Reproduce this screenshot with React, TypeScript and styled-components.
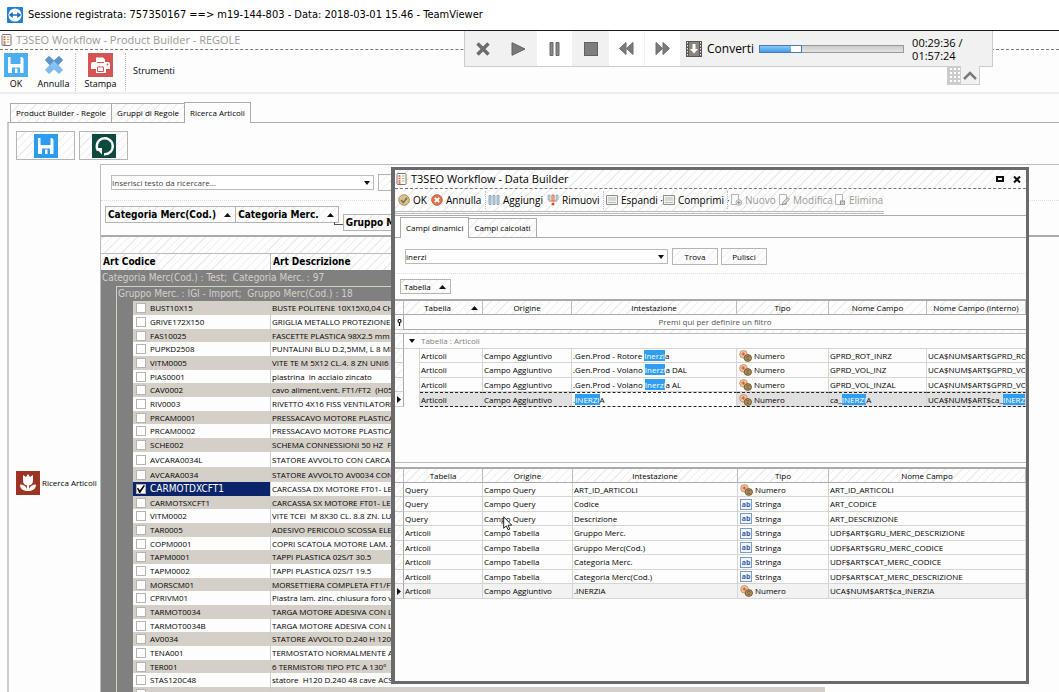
import React from 'react';
import styled, { createGlobalStyle, css } from 'styled-components';

const ui = `"Open Sans", "Noto Sans", sans-serif`;
const wide = `"DejaVu Sans Condensed", "DejaVu Sans", sans-serif`;

const hatch = css`
  background-image: repeating-linear-gradient(-45deg, transparent 0 5px, #ececec 5px 6px);
`;

const Global = createGlobalStyle`
  * { box-sizing: border-box; }
  body { margin: 0; background: #fdfdfd; font-family: ${ui}; font-size: 8px; line-height: 12px; color: #000; }
  button, input { font: inherit; color: inherit; margin: 0; padding: 0; border: 0; background: none; border-radius: 0; }
  table { border-collapse: separate; border-spacing: 0; table-layout: fixed; }
  td, th { padding: 0; font-weight: normal; text-align: left; white-space: pre; overflow: hidden; }
  svg { flex: none; }
`;

const Desktop = styled.div`
  position: relative;
  height: 100vh;
  overflow: hidden;
  display: flex;
  flex-direction: column;
`;

const SessionBar = styled.header`
  flex: none;
  height: 31px;
  display: flex;
  align-items: center;
  gap: 5px;
  padding-left: 7px;
  background: #fff;
  border-bottom: 1px solid #1c1c1c;
  font: 11px/16px ${wide};
`;

const AppTitle = styled.div`
  flex: none;
  height: 19px;
  display: flex;
  align-items: center;
  gap: 4px;
  padding-left: 1px;
  border-bottom: 1px dashed #777;
  font-size: 11px;
  line-height: 14px;
  color: #999c94;
`;

const MainToolbar = styled.div`
  flex: none;
  height: 44px;
  display: flex;
  padding-top: 3px;
  border-bottom: 2px solid #eee;
`;

const BigTool = styled.button<{ $w: number }>`
  width: ${p => p.$w}px;
  display: flex;
  flex-direction: column;
  align-items: center;
  gap: 1px;
  font-size: 9px;
`;

const ToolSeparator = styled.span<{ $small?: boolean }>`
  border-left: 1px dotted #bbb;
  margin: 0 0 1px;
  ${p => p.$small && 'height: 18px; margin: 0 2px 0 1px;'}
`;

const MenuTool = styled.button`
  align-self: center;
  padding: 0 7px 4px;
  font-size: 9px;
`;

const Tabs = styled.div<{ $left: number; $top: number }>`
  flex: none;
  display: flex;
  align-items: flex-end;
  padding: ${p => p.$top}px 0 0 ${p => p.$left}px;
`;

const Tab = styled.button<{ $active?: boolean }>`
  height: ${p => (p.$active ? 21 : 19)}px;
  padding: 0 5px;
  border: 1px solid #aaa;
  border-bottom: 0;
  margin-right: -1px;
  white-space: nowrap;
  ${p => (p.$active ? 'background: #fdfdfd; position: relative; margin-bottom: -1px;' : hatch)}
`;

const Page = styled.main`
  flex: 1;
  min-height: 0;
  display: flex;
  flex-direction: column;
  margin-left: 7px;
  border-left: 2px solid #ccc;
  border-top: 1px solid #aaa;
`;

const ActionRow = styled.div`
  flex: none;
  display: flex;
  gap: 4px;
  padding: 8px 0 4px 7px;
`;

const ActionButton = styled.button<{ $w: number }>`
  width: ${p => p.$w}px;
  height: 29px;
  display: flex;
  align-items: center;
  justify-content: center;
  border: 1px solid #b5b5b5;
  ${hatch}
`;

const Body = styled.div`
  flex: 1;
  min-height: 0;
  display: flex;
`;

const Side = styled.nav`
  flex: none;
  width: 91px;
  padding: 307px 0 0 7px;
`;

const SideLink = styled.a`
  display: flex;
  align-items: center;
  gap: 2px;
  color: inherit;
  text-decoration: none;
  white-space: nowrap;
`;

const GridPanel = styled.section`
  flex: 1;
  min-width: 0;
  border-left: 1px solid #bbb;
  border-top: 1px solid #bbb;
`;

const SearchRow = styled.div<{ $main?: boolean }>`
  display: flex;
  align-items: center;
  gap: 3px;
  padding: ${p => (p.$main ? '9px 0 9px 10px' : '10px 0 8px 10px')};
  border-bottom: 1px dotted #ddd;
`;

const Combo = styled.div<{ $w: number }>`
  flex: none;
  width: ${p => p.$w}px;
  height: 15px;
  display: flex;
  align-items: center;
  margin-right: 1px;
  border: 1px solid #bbb;
  background: #fff;
  input { flex: 1; min-width: 0; height: 13px; outline: 0; }
  input::placeholder { color: #444; opacity: 1; }
  button { width: 12px; height: 13px; display: flex; align-items: center; justify-content: center; }
`;

const PushButton = styled.button`
  flex: none;
  width: 46px;
  height: 17px;
  border: 1px solid #b5b5b5;
  ${hatch}
`;

const Chips = styled.div<{ $main?: boolean }>`
  display: flex;
  align-items: flex-start;
  padding: ${p => (p.$main ? '5px 0 0 4px' : '5px 0 5px 5px')};
  ${p => p.$main && 'height: 36px; border-bottom: 2px solid #aaa;'}
`;

const Chip = styled.button<{ $bold?: boolean; $low?: boolean }>`
  height: ${p => (p.$bold ? 17 : 15)}px;
  display: flex;
  align-items: center;
  gap: 8px;
  padding: 0 4px 0 ${p => (p.$bold ? 2 : 3)}px;
  margin: ${p => (p.$low ? '8px 0 0' : '0 -1px 0 0')};
  border: 1px solid #b5b5b5;
  white-space: nowrap;
  ${p => p.$bold && `font-family: ${wide}; font-weight: bold; font-size: 10px;`}
  ${hatch}
`;

const Elbow = styled.span`
  width: 9px;
  height: 3px;
  margin: 16px 0 0 -4px;
  border-left: 1px solid #555;
  border-bottom: 1px solid #555;
`;

const ArticleTable = styled.table`
  width: 724px;
`;

const BandCell = styled.td`
  height: 17px;
  border-bottom: 1px solid #bbb;
  ${hatch}
`;

const ArticleHead = styled.th`
  height: 16px;
  padding-left: 2px;
  border-right: 1px solid #bbb;
  font-family: ${wide};
  font-weight: bold;
  font-size: 10px;
  ${hatch}
`;

const GroupCell = styled.td<{ $nested?: boolean }>`
  height: ${p => (p.$nested ? 15 : 16)}px;
  padding-left: 1px;
  background: #808080;
  color: #d4d0c8;
  font-family: ${wide};
  font-size: 10px;
  ${p => p.$nested && 'border-left: 1px solid #d4d0c8; border-top: 1px solid #d4d0c8;'}
`;

const Indent = styled.td<{ $line?: boolean }>`
  background: #808080;
  ${p => p.$line && 'border-left: 1px solid #d4d0c8;'}
`;

const ArticleRow = styled.tr<{ $tall?: boolean; $selected?: boolean }>`
  height: 14px;
  &:nth-child(3n) { height: 13px; }
  ${p => p.$tall && '&&& { height: 15px; }'}
  &:nth-child(odd) { background: #d4d0c8; }
  td:nth-child(3) {
    border-right: 1px solid #ccc;
    ${p => p.$selected && `background: #0a246a; color: #fff; font-family: ${wide}; font-size: 10px;`}
  }
  td:nth-child(4) { padding-left: 1px; }
`;

const CheckLabel = styled.label`
  display: flex;
  align-items: center;
  gap: 4px;
  height: 12px;
  padding-left: 3px;
`;

const Check = styled.input`
  appearance: none;
  flex: none;
  width: 10px;
  height: 10px;
  border: 1px solid #b4b4b4;
  background: #fff;
  &:checked::after {
    content: '';
    display: block;
    width: 8px;
    height: 8px;
    background: #000;
    clip-path: polygon(0 45%, 15% 35%, 35% 65%, 85% 0, 100% 8%, 40% 100%, 28% 100%);
  }
`;

/* ---- playback overlay ---- */

const Player = styled.div`
  position: absolute;
  z-index: 2;
  top: 31px;
  left: 464px;
  width: 529px;
  height: 36px;
  display: flex;
  background: #f1f1f1;
  border: 1px solid #ccc;
  border-top: 0;
`;

const PlayerButton = styled.button<{ $lit?: boolean }>`
  width: 36px;
  display: flex;
  align-items: center;
  justify-content: center;
  border-right: 1px solid #f1f1f1;
  background: ${p => (p.$lit ? '#fff' : '#f1f1f1')};
`;

const ConvertButton = styled.button`
  display: flex;
  align-items: center;
  gap: 5px;
  padding: 0 5px;
  font-size: 12px;
  line-height: 16px;
`;

const Track = styled.div`
  align-self: center;
  width: 145px;
  height: 8px;
  border: 1px solid #999;
  background: linear-gradient(#ccc, #e2e2e2);
`;

const Played = styled.div`
  height: 8px;
  margin: -1px;
  border: 1px solid #4a78b8;
  border-right: 11px solid #fff;
  outline: 1px solid #4a78b8;
  outline-offset: -1px;
  background: linear-gradient(#8cc8f4, #3f9fe8);
`;

const Clock = styled.div`
  padding: 5px 0 0 8px;
  font-size: 11px;
  line-height: 13px;
`;

const PlayerHandle = styled.div`
  position: absolute;
  top: 35px;
  right: 12px;
  display: flex;
  width: 33px;
  height: 19px;
  border: 1px solid #ccc;
  border-top: 0;
  background: #f1f1f1;
`;

const Grip = styled.span`
  width: 13px;
  background: repeating-linear-gradient(90deg, #ccc 0 2px, transparent 2px 4px), repeating-linear-gradient(#ccc 0 2px, #fff 2px 4px);
`;

const FoldButton = styled.button`
  flex: 1;
  display: flex;
  align-items: center;
  justify-content: center;
`;

/* ---- data builder window ---- */

const Dialog = styled.section`
  position: absolute;
  z-index: 1;
  top: 167px;
  left: 391px;
  right: 30px;
  bottom: 8px;
  display: flex;
  flex-direction: column;
  border: 3px solid #6a6a6c;
  border-left-width: 4px;
  background: #fdfdfd;
`;

const DialogTitle = styled.div`
  flex: none;
  height: 19px;
  display: flex;
  align-items: center;
  gap: 4px;
  padding: 0 3px 0 1px;
  border-bottom: 1px dashed #777;
  font-size: 11px;
  line-height: 14px;
  ${hatch}
  h2 { flex: 1; margin: 0; font: inherit; }
  button { width: 13px; height: 12px; display: flex; align-items: center; justify-content: center; }
`;

const DialogTools = styled.div`
  flex: none;
  align-self: flex-start;
  width: 489px;
  height: 25px;
  display: flex;
  align-items: center;
  padding-left: 3px;
  border-bottom: 3px double #bbb;
  ${hatch}
`;

const SmallTool = styled.button<{ $w: number }>`
  flex: none;
  width: ${p => p.$w}px;
  display: flex;
  align-items: center;
  gap: 3px;
  font-size: 10px;
  line-height: 14px;
  white-space: nowrap;
  &:disabled { color: #999c94; }
`;

const DialogBody = styled.div`
  flex: 1;
  min-height: 0;
  display: flex;
  flex-direction: column;
  margin-top: 1px;
  border-top: 1px solid #aaa;
`;

const TabPage = styled.div`
  flex: 1;
  min-height: 0;
  border-top: 1px solid #aaa;
  display: flex;
  flex-direction: column;
`;

const FieldPane = styled.div<{ $h?: number }>`
  ${p => (p.$h ? `flex: none; height: ${p.$h}px; border-bottom: 1px solid #bbb; margin-bottom: 4px;` : 'flex: 1; min-height: 0;')}
  border-top: 2px solid #aaa;
  overflow: hidden;
`;

const FieldTable = styled.table`
  width: 100%;
`;

const HeadCell = styled.th`
  height: 14px;
  text-align: center;
  border-right: 1px solid #bbb;
  border-bottom: 1px solid #aaa;
  ${hatch}
`;

const HeadSort = styled.span`
  display: flex;
  align-items: center;
  padding-right: 4px;
  b { flex: 1; font-weight: normal; }
`;

const Gutter = styled.td`
  border-right: 1px solid #aaa;
  border-bottom: 1px solid #ccc;
  ${hatch}
  svg { display: block; margin: 0 auto; }
`;

const FilterCell = styled.td`
  height: 15px;
  text-align: center;
  color: #555;
  border-bottom: 1px solid #aaa;
`;

const GapCell = styled.td`
  height: 4px;
  border-bottom: 1px solid #bbb;
  ${hatch}
`;

const GroupTitle = styled.td`
  height: 15px;
  color: #808080;
  border-bottom: 1px solid #d5d5d5;
  svg { margin: 0 6px 0 5px; vertical-align: 1px; }
`;

const FieldRow = styled.tr<{ $soft?: boolean }>`
  height: 14px;
  &:nth-child(even) { height: 15px; }
  ${p => p.$soft && 'background: #f2f2f2;'}
`;

const FieldCell = styled.td<{ $current?: boolean; $plain?: boolean }>`
  padding-left: 1px;
  border-right: 1px solid #d5d5d5;
  border-bottom: 1px solid #d5d5d5;
  ${p => p.$current && `border-top: 1px dashed #222; border-bottom: 1px dashed #222; background: ${p.$plain ? '#fdfdfd' : '#e0e0e0'};`}
  mark { background: #2f9df0; color: #fff; }
`;

const Spacer = styled.td`
  border-right: 1px solid #d5d5d5;
`;

const TypeTag = styled.span`
  display: flex;
  align-items: center;
  gap: 2px;
  height: 12px;
  padding-left: 1px;
`;

const Pointer = styled.svg`
  position: absolute;
  left: 108px;
  top: 346px;
`;

/* ---- icons ---- */

const Down = () => <svg width="6" height="4" viewBox="0 0 6 4"><path d="M0 0h6L3 4z" fill="#111" /></svg>;
const Up = () => <svg width="7" height="4" viewBox="0 0 7 4"><path d="M0 4h7L3.500 0z" fill="#111" /></svg>;
const Current = () => <svg width="4" height="7" viewBox="0 0 4 7"><path d="M0 0v7l4-3.500z" fill="#111" /></svg>;
const Pin = () => <svg width="5" height="7" viewBox="0 0 5 7"><circle cx="2.500" cy="2" r="1.500" fill="none" stroke="#111" strokeWidth="1.200" /><path d="M2.500 3v4" stroke="#111" strokeWidth="1.200" /></svg>;

const SessionIcon = () => (
  <svg width="16" height="16" viewBox="0 0 16 16">
    <rect width="16" height="16" rx="1" fill="#1f7fd6" />
    <circle cx="8" cy="8" r="6.600" fill="#fff" />
    <path d="M1.800 8l4-3v2.200h4.400V5l4 3-4 3V8.800H5.800V11z" fill="#1f6fc0" />
  </svg>
);

const FormIcon = () => (
  <svg width="11" height="12" viewBox="0 0 11 12">
    <rect x="1" y=".5" width="9" height="11" rx="1" fill="#fff" stroke="#777" />
    <path d="M2.500 3h2M2.500 5.500h2M2.500 8h2M2.500 10h2" stroke="#d9552c" strokeWidth="1.400" />
    <path d="M6 3h2.500M6 5.500h2.500M6 8h2.500" stroke="#e89a5a" strokeWidth="1.200" />
  </svg>
);

const SaveIcon = ({ color }: { color: string }) => (
  <svg width="24" height="24" viewBox="0 0 24 24">
    <rect width="24" height="24" fill={color} />
    <path d="M4 4h2.500v7h10V4H18l1.500 1.500V20H16v-5.500H8V20H4z" fill="#fff" />
    <rect x="11" y="15.500" width="2.500" height="4.500" fill="#fff" />
  </svg>
);

const CancelIcon = () => (
  <svg width="24" height="24" viewBox="0 0 24 24">
    <path d="M3 7l4-4 5 4.500L17 3l4 4-4.500 5 4.500 5-4 4-5-4.500L7 21l-4-4 4.500-5z" fill="#7fbcec" />
    <path d="M3 7l4-4 5 4.500L17 3l4 4-4.500 5h-9z" fill="#5f97cc" />
    <path d="M12 8l4 4-4 4-4-4z" fill="#86c4f2" />
  </svg>
);

const PrintIcon = () => (
  <svg width="25" height="24" viewBox="0 0 25 24">
    <rect width="25" height="24" fill="#d35452" />
    <path d="M8 4.500h7l2 2V9h3a2 2 0 0 1 2 2v5h-4v4H8v-4H3v-5a2 2 0 0 1 2-2h3z" fill="#fff" />
    <path d="M9 9.500h7M9.500 14h6v4.500h-6z" stroke="#d35452" fill="none" />
    <circle cx="19.500" cy="11.500" r=".9" fill="#d35452" />
  </svg>
);

const RefreshIcon = () => (
  <svg width="24" height="24" viewBox="0 0 24 24">
    <rect width="24" height="24" fill="#0b4a3d" />
    <path d="M6 16.500A8 8 0 1 1 12 20.200" fill="none" stroke="#fff" strokeWidth="2.400" />
    <path d="M3.500 14H10v6.500z" fill="#fff" />
  </svg>
);

const TulipIcon = () => (
  <svg width="24" height="24" viewBox="0 0 24 24">
    <rect width="24" height="24" fill="#9c3323" />
    <path d="M7 4l3 2 2-3 2 3 3-2v6a5 5 0 0 1-4 4.500V18c1-3 3.500-4.500 7-4.500 0 4-2.500 6.500-8 6.500s-8-2.500-8-6.500c3.500 0 6 1.500 7 4.500v-3.500A5 5 0 0 1 7 10z" fill="#fff" />
  </svg>
);

const CoinsIcon = () => (
  <svg width="13" height="12" viewBox="0 0 13 12">
    <circle cx="4.500" cy="4.300" r="3.800" fill="#f3c79e" stroke="#b98a55" strokeWidth=".8" />
    <path d="M2.500 4h3.500M4.200 2.200v3.600" stroke="#cf4a3a" />
    <ellipse cx="8.800" cy="8" rx="3.700" ry="3.400" fill="#b0905c" stroke="#6b5330" strokeWidth=".9" />
    <path d="M7.200 7.300c1-.9 2.200-.9 3.200 0M7.500 9.200h2.600" stroke="#54452a" fill="none" strokeWidth=".8" />
  </svg>
);

const StringIcon = () => (
  <svg width="13" height="11" viewBox="0 0 13 11">
    <rect x=".5" y=".5" width="11" height="10" fill="#f2f7ff" stroke="#7d9ccc" />
    <text x="6" y="8" textAnchor="middle" fontSize="7" fontWeight="700" fill="#3a5c9c">ab</text>
  </svg>
);

const toolSvg: Record<string, React.ReactNode> = {
  ok: <><circle cx="6" cy="6" r="5.300" fill="#dcc08a" stroke="#a8946a" /><path d="M3 6l2.300 2.500L9 3.800" stroke="#74705a" strokeWidth="1.700" fill="none" /></>,
  cancel: <><circle cx="6" cy="6" r="5.300" fill="#df7450" stroke="#bd6848" /><path d="M3.800 3.800l4.400 4.400M8.200 3.800L3.800 8.200" stroke="#fff" strokeWidth="1.800" /></>,
  add: <path d="M1 1.500h2v9H1zM5 1.500h2v9H5zM9 1.500h2v9H9z" fill="#c4d8ea" stroke="#8296aa" strokeWidth=".8" />,
  remove: <><path d="M1 1h2v5H1zM9 1h2v5H9z" fill="#c4d8ea" stroke="#8aa0b4" strokeWidth=".7" /><path d="M4.800 1h2.400v6H4.800z" fill="#f0a888" stroke="#d4704c" strokeWidth=".7" /><path d="M2 7h8" stroke="#d4704c" /><circle cx="6" cy="10" r="1.500" fill="#d04c34" /></>,
  grid: <><path d="M.5 1.500h11v9H.5z" fill="#f5f5f0" stroke="#8a8f8a" /><path d="M2 4h8M2 6h8M2 8.500h8" stroke="#b5bab5" /></>,
  fresh: <><path d="M1.500.5h7v10h-7z" fill="#fafafa" stroke="#b5b5b5" /><circle cx="8.800" cy="8.500" r="2.800" fill="#eee" stroke="#999" strokeWidth=".8" /><path d="M7.300 8.500h3M8.800 7v3" stroke="#888" /></>,
  edit: <><path d="M1.500.5h7v10h-7z" fill="#fafafa" stroke="#b5b5b5" /><path d="M4 11l1-3 5-4.500 1.500 1.500L7 10z" fill="#ddd" stroke="#888" strokeWidth=".8" /></>,
  drop: <><path d="M1.500.5h7v10h-7z" fill="#fafafa" stroke="#b5b5b5" /><path d="M6 6.500h5V11H6z" fill="#999" /><path d="M7 7.500l3 2.800M10 7.500L7 10.300" stroke="#eee" /></>,
};
const ToolIcon = ({ name }: { name: string }) => <svg width="12" height="12" viewBox="0 0 12 12">{toolSvg[name]}</svg>;

/* ---- data ---- */

const articles: [string, string][] = [
  ['BUST10X15', 'BUSTE POLITENE 10X15X0,04 CH'],
  ['GRIVE172X150', 'GRIGLIA METALLO PROTEZIONE'],
  ['FAS10025', 'FASCETTE PLASTICA 98X2.5 mm'],
  ['PUPKD2508', 'PUNTALINI BLU D.2,5MM, L 8 MM'],
  ['VITM0005', 'VITE TE M 5X12 CL.4. 8 ZN UNI6'],
  ['PIAS0001', 'piastrina  in acciaio zincato'],
  ['CAV0002', 'cavo aliment.vent. FT1/FT2  (H05)'],
  ['RIV0003', 'RIVETTO 4X16 FISS VENTILATORE'],
  ['PRCAM0001', 'PRESSACAVO MOTORE PLASTICA'],
  ['PRCAM0002', 'PRESSACAVO MOTORE PLASTICA'],
  ['SCHE002', 'SCHEMA CONNESSIONI 50 HZ  FT'],
  ['AVCARA0034L', 'STATORE AVVOLTO CON CARCA'],
  ['AVCARA0034', 'STATORE AVVOLTO AV0034 CON'],
  ['CARMOTDXCFT1', 'CARCASSA DX MOTORE FT01- LE'],
  ['CARMOTSXCFT1', 'CARCASSA SX MOTORE FT01- LE'],
  ['VITM0002', 'VITE TCEI  M 8X30 CL. 8.8 ZN. LU'],
  ['TAR0005', 'ADESIVO PERICOLO SCOSSA ELE'],
  ['COPM0001', 'COPRI SCATOLA MOTORE LAM. Z'],
  ['TAPM0001', 'TAPPI PLASTICA 02S/T 30.5'],
  ['TAPM0002', 'TAPPI PLASTICA 02S/T 19.5'],
  ['MORSCM01', 'MORSETTIERA COMPLETA FT1/FT'],
  ['CPRIVM01', 'Piastra lam. zinc. chiusura foro vi'],
  ['TARMOT0034', 'TARGA MOTORE ADESIVA CON L'],
  ['TARMOT0034B', 'TARGA MOTORE ADESIVA CON L'],
  ['AV0034', 'STATORE AVVOLTO D.240 H 120'],
  ['TENA001', 'TERMOSTATO NORMALMENTE AP'],
  ['TER001', '6 TERMISTORI TIPO PTC A 130°'],
  ['STAS120C48', 'statore  H120 D.240 48 cave ACS'],
  ['ROTE003', 'ROTORE CONICO FINITO FI IN HASE BASE-ESCAVE ACS'],
];

const found: [React.ReactNode, React.ReactNode, React.ReactNode][] = [
  [<>.Gen.Prod - Rotore <mark>Inerzi</mark>a</>, 'GPRD_ROT_INRZ', 'UCA$NUM$ART$GPRD_ROT_INRZ'],
  [<>.Gen.Prod - Volano <mark>Inerzi</mark>a DAL</>, 'GPRD_VOL_INZ', 'UCA$NUM$ART$GPRD_VOL_INZ'],
  [<>.Gen.Prod - Volano <mark>Inerzi</mark>a AL</>, 'GPRD_VOL_INZAL', 'UCA$NUM$ART$GPRD_VOL_INZAL'],
  [<>.<mark>INERZI</mark>A</>, <>ca_<mark>INERZI</mark>A</>, <>UCA$NUM$ART$ca_<mark>INERZI</mark>A</>],
];

const chosen: [string, string, string, string, string][] = [
  ['Query', 'Campo Query', 'ART_ID_ARTICOLI', 'Numero', 'ART_ID_ARTICOLI'],
  ['Query', 'Campo Query', 'Codice', 'Stringa', 'ART_CODICE'],
  ['Query', 'Campo Query', 'Descrizione', 'Stringa', 'ART_DESCRIZIONE'],
  ['Articoli', 'Campo Tabella', 'Gruppo Merc.', 'Stringa', 'UDF$ART$GRU_MERC_DESCRIZIONE'],
  ['Articoli', 'Campo Tabella', 'Gruppo Merc(Cod.)', 'Stringa', 'UDF$ART$GRU_MERC_CODICE'],
  ['Articoli', 'Campo Tabella', 'Categoria Merc.', 'Stringa', 'UDF$ART$CAT_MERC_CODICE'],
  ['Articoli', 'Campo Tabella', 'Categoria Merc(Cod.)', 'Stringa', 'UDF$ART$CAT_MERC_DESCRIZIONE'],
  ['Articoli', 'Campo Aggiuntivo', '.INERZIA', 'Numero', 'UCA$NUM$ART$ca_INERZIA'],
];

const Columns = ({ widths }: { widths: (number | undefined)[] }) => (
  <colgroup>{widths.map((width, i) => <col key={i} width={width} />)}</colgroup>
);

const Articles = () => (
  <ArticleTable>
    <Columns widths={[15, 17, 138, undefined]} />
    <thead>
      <tr><BandCell colSpan={4} /></tr>
      <tr><ArticleHead colSpan={3}>Art Codice</ArticleHead><ArticleHead>Art Descrizione</ArticleHead></tr>
      <tr><GroupCell colSpan={4}>Categoria Merc(Cod.) : Test;  Categoria Merc. : 97</GroupCell></tr>
      <tr><Indent /><GroupCell $nested colSpan={3}>Gruppo Merc. : IGI - Import;  Gruppo Merc(Cod.) : 18</GroupCell></tr>
    </thead>
    <tbody>
      {articles.map(([code, text]) => (
        <ArticleRow key={code} $tall={code.startsWith('AVCARA')} $selected={code === 'CARMOTDXCFT1'}>
          <Indent />
          <Indent $line />
          <td><CheckLabel><Check type="checkbox" defaultChecked={code === 'CARMOTDXCFT1'} />{code}</CheckLabel></td>
          <td>{text}</td>
        </ArticleRow>
      ))}
    </tbody>
  </ArticleTable>
);

const FoundFields = () => (
  <FieldTable>
    <Columns widths={[9, 16, 63, 89, 165, 92, 98, undefined]} />
    <thead>
      <tr>
        <HeadCell />
        <HeadCell colSpan={2}><HeadSort><b>Tabella</b><Up /></HeadSort></HeadCell>
        <HeadCell>Origine</HeadCell>
        <HeadCell>Intestazione</HeadCell>
        <HeadCell>Tipo</HeadCell>
        <HeadCell>Nome Campo</HeadCell>
        <HeadCell>Nome Campo (interno)</HeadCell>
      </tr>
      <tr><Gutter><Pin /></Gutter><FilterCell colSpan={7}>Premi qui per definire un filtro</FilterCell></tr>
      <tr><GapCell colSpan={8} /></tr>
      <tr><Gutter /><GroupTitle colSpan={7}><Down />Tabella : Articoli</GroupTitle></tr>
    </thead>
    <tbody>
      {found.map(([heading, name, inner], i) => {
        const current = i === 3;
        return (
          <FieldRow key={i}>
            <Gutter>{current && <Current />}</Gutter>
            <Spacer />
            <FieldCell $current={current}>Articoli</FieldCell>
            <FieldCell $current={current}>Campo Aggiuntivo</FieldCell>
            <FieldCell $current={current} $plain>{heading}</FieldCell>
            <FieldCell $current={current}><TypeTag><CoinsIcon />Numero</TypeTag></FieldCell>
            <FieldCell $current={current}>{name}</FieldCell>
            <FieldCell $current={current}>{inner}</FieldCell>
          </FieldRow>
        );
      })}
    </tbody>
  </FieldTable>
);

const ChosenFields = () => (
  <FieldTable>
    <Columns widths={[9, 79, 90, 165, 91, undefined]} />
    <thead>
      <tr>
        <HeadCell />
        {['Tabella', 'Origine', 'Intestazione', 'Tipo', 'Nome Campo'].map(h => <HeadCell key={h}>{h}</HeadCell>)}
      </tr>
    </thead>
    <tbody>
      {chosen.map(([table, origin, heading, type, name], i) => (
        <FieldRow key={name} $soft={i === 7}>
          <Gutter>{i === 7 && <Current />}</Gutter>
          <FieldCell>{table}</FieldCell>
          <FieldCell>{origin}</FieldCell>
          <FieldCell>{heading}</FieldCell>
          <FieldCell><TypeTag>{type === 'Numero' ? <CoinsIcon /> : <StringIcon />}{type}</TypeTag></FieldCell>
          <FieldCell>{name}</FieldCell>
        </FieldRow>
      ))}
    </tbody>
  </FieldTable>
);

const DataBuilder = () => (
  <Dialog role="dialog" aria-label="Data Builder">
    <DialogTitle>
      <FormIcon />
      <h2>T3SEO Workflow - Data Builder</h2>
      <button aria-label="Ingrandisci"><svg width="8" height="6"><rect x="1" y="1" width="6" height="4" fill="none" stroke="#111" strokeWidth="2" /></svg></button>
      <button aria-label="Chiudi"><svg width="8" height="7"><path d="M1 .5l6 6M7 .5l-6 6" stroke="#111" strokeWidth="2" /></svg></button>
    </DialogTitle>
    <DialogTools>
      <SmallTool $w={33}><ToolIcon name="ok" />OK</SmallTool>
      <SmallTool $w={53}><ToolIcon name="cancel" />Annulla</SmallTool>
      <ToolSeparator $small />
      <SmallTool $w={59}><ToolIcon name="add" />Aggiungi</SmallTool>
      <SmallTool $w={55}><ToolIcon name="remove" />Rimuovi</SmallTool>
      <ToolSeparator $small />
      <SmallTool $w={57}><ToolIcon name="grid" />Espandi ·</SmallTool>
      <SmallTool $w={63}><ToolIcon name="grid" />Comprimi ·</SmallTool>
      <ToolSeparator $small />
      <SmallTool $w={48} disabled><ToolIcon name="fresh" />Nuovo</SmallTool>
      <SmallTool $w={56} disabled><ToolIcon name="edit" />Modifica</SmallTool>
      <SmallTool $w={50} disabled><ToolIcon name="drop" />Elimina</SmallTool>
    </DialogTools>
    <DialogBody>
      <Tabs $left={5} $top={1}>
        <Tab $active>Campi dinamici</Tab>
        <Tab>Campi calcolati</Tab>
      </Tabs>
      <TabPage>
        <SearchRow>
          <Combo $w={263}>
            <input aria-label="Cerca campo" defaultValue="inerzi" />
            <button aria-label="Apri elenco"><Down /></button>
          </Combo>
          <PushButton>Trova</PushButton>
          <PushButton>Pulisci</PushButton>
        </SearchRow>
        <Chips><Chip>Tabella <Up /></Chip></Chips>
        <FieldPane $h={164}><FoundFields /></FieldPane>
        <FieldPane><ChosenFields /></FieldPane>
      </TabPage>
    </DialogBody>
    <Pointer width="10" height="15" viewBox="0 0 10 15">
      <path d="M.7.8v11.500l2.600-2.500 1.800 4 1.700-.8L5 9.200h3.800z" fill="#fff" stroke="#222" />
    </Pointer>
  </Dialog>
);

const PlayerBar = () => (
  <Player>
    <PlayerButton aria-label="Chiudi"><svg width="14" height="14"><path d="M1.500 1.500l11 11M12.500 1.500l-11 11" stroke="#6c6c6c" strokeWidth="3.500" /></svg></PlayerButton>
    <PlayerButton aria-label="Riproduci"><svg width="15" height="14"><path d="M1 .7v12.600L14 7z" fill="#7a7a7a" stroke="#606060" /></svg></PlayerButton>
    <PlayerButton $lit aria-label="Pausa"><svg width="11" height="14"><path d="M1 .5h3v13H1zM7 .5h3v13H7z" fill="#8a8a8a" stroke="#666" /></svg></PlayerButton>
    <PlayerButton aria-label="Ferma"><svg width="14" height="14"><rect x=".5" y=".5" width="13" height="13" fill="#7e7e7e" stroke="#606060" /></svg></PlayerButton>
    <PlayerButton $lit aria-label="Indietro"><svg width="15" height="13"><path d="M7 .5v12L.5 6.500zM14 .5v12L7.500 6.500z" fill="#7a7a7a" stroke="#6a6a6a" /></svg></PlayerButton>
    <PlayerButton $lit aria-label="Avanti"><svg width="15" height="13"><path d="M1 .5v12l6.500-6zM8 .5v12l6.500-6z" fill="#7a7a7a" stroke="#6a6a6a" /></svg></PlayerButton>
    <ConvertButton>
      <svg width="16" height="16" viewBox="0 0 16 16">
        <rect width="16" height="16" fill="#555" />
        <rect x="3" y="1" width="10" height="14" fill="#8a867e" />
        <path d="M1.500 1v14M14.500 1v14" stroke="#eee" strokeDasharray="1.500 1.500" />
        <path d="M6.500 3h3v5h2.500l-4 4.500L4 8h2.500z" fill="#fff" />
      </svg>
      Converti
    </ConvertButton>
    <Track><Played style={{ width: `${(29 / 96) * 100}%` }} /></Track>
    <Clock>00:29:36 /<br />01:57:24</Clock>
    <PlayerHandle>
      <Grip />
      <FoldButton aria-label="Comprimi"><svg width="14" height="9"><path d="M1 8l6-6 6 6" fill="none" stroke="#7a7a7a" strokeWidth="2.500" /></svg></FoldButton>
    </PlayerHandle>
  </Player>
);

export default function App() {
  return (
    <Desktop>
      <Global />
      <SessionBar><SessionIcon />Sessione registrata: 757350167 ==&gt; m19-144-803 - Data: 2018-03-01 15.46 - TeamViewer</SessionBar>
      <AppTitle><FormIcon />T3SEO Workflow - Product Builder - REGOLE</AppTitle>
      <MainToolbar>
        <BigTool $w={32}><SaveIcon color="#4aaef0" />OK</BigTool>
        <BigTool $w={43}><CancelIcon />Annulla</BigTool>
        <ToolSeparator />
        <BigTool $w={49}><PrintIcon />Stampa</BigTool>
        <ToolSeparator />
        <MenuTool>Strumenti</MenuTool>
      </MainToolbar>
      <Tabs $left={10} $top={8}>
        <Tab>Product Builder - Regole</Tab>
        <Tab>Gruppi di Regole</Tab>
        <Tab $active>Ricerca Articoli</Tab>
      </Tabs>
      <Page>
        <ActionRow>
          <ActionButton $w={59} aria-label="Salva"><SaveIcon color="#2a9df0" /></ActionButton>
          <ActionButton $w={49} aria-label="Aggiorna"><RefreshIcon /></ActionButton>
        </ActionRow>
        <Body>
          <Side><SideLink href="#ricerca"><TulipIcon />Ricerca Articoli</SideLink></Side>
          <GridPanel>
            <SearchRow $main>
              <Combo $w={263}>
                <input aria-label="Testo da ricercare" placeholder="Inserisci testo da ricercare..." />
                <button aria-label="Apri elenco"><Down /></button>
              </Combo>
              <PushButton>Trova</PushButton>
            </SearchRow>
            <Chips $main>
              <Chip $bold>Categoria Merc(Cod.) <Up /></Chip>
              <Chip $bold>Categoria Merc. <Up /></Chip>
              <Elbow />
              <Chip $bold $low>Gruppo Merc. <Up /></Chip>
            </Chips>
            <Articles />
          </GridPanel>
        </Body>
      </Page>
      <PlayerBar />
      <DataBuilder />
    </Desktop>
  );
}
